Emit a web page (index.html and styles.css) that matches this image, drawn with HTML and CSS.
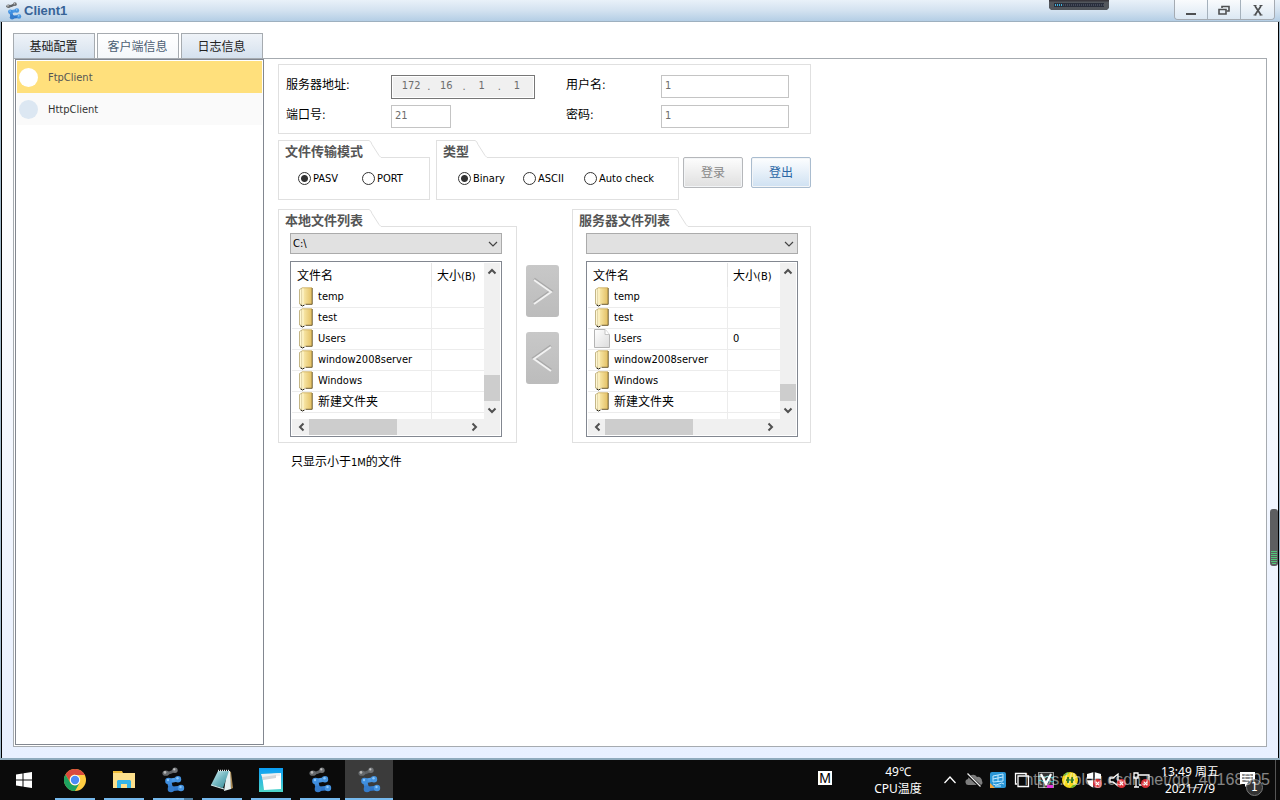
FILE: index.html
```html
<!DOCTYPE html>
<html lang="zh-CN">
<head>
<meta charset="utf-8">
<title>Client1</title>
<link rel="stylesheet" href="styles.css">
</head>
<body>
<svg class="defs" aria-hidden="true">
  <defs>
    <linearGradient id="gFolder" x1="0" x2="1" y1="0" y2="0"><stop offset="0" stop-color="#fbeeb4"/><stop offset="1" stop-color="#e3bf62"/></linearGradient>
    <linearGradient id="gPage" x1="0" x2="1" y1="0" y2="1"><stop offset="0" stop-color="#fff"/><stop offset="1" stop-color="#dcdcdc"/></linearGradient>
    <linearGradient id="gBlue" x1="0" x2="0" y1="0" y2="1"><stop offset="0" stop-color="#4f9eea"/><stop offset="1" stop-color="#2d74c8"/></linearGradient>
    <linearGradient id="gNote" x1="0" x2="1" y1="0" y2="1"><stop offset="0" stop-color="#d5f1f4"/><stop offset=".5" stop-color="#74b8c2"/><stop offset="1" stop-color="#2f8794"/></linearGradient>
    <linearGradient id="gSky" x1="0" x2="0" y1="0" y2="1"><stop offset="0" stop-color="#0a9df5"/><stop offset="1" stop-color="#4fd6c8"/></linearGradient>
    <symbol id="folder" viewBox="0 0 16 20">
      <path d="M1.500 2.500L4 1v16.500L1.500 17z" fill="#fff7d2" stroke="#b5a56c" stroke-width=".8"/>
      <path d="M4 .8h10V17H7l-2.500 1.500z" fill="url(#gFolder)"/>
      <path d="M4 .8h10" stroke="#c9ab5c" stroke-width=".8"/>
      <path d="M14.200 1v16.300H7.500" fill="none" stroke="#6b5828"/>
      <path d="M5 1.500v16" stroke="#fff6cf"/>
      <path d="M2.500 18l2 1 2-1" fill="none" stroke="#2a2618"/>
    </symbol>
    <symbol id="page" viewBox="0 0 16 20"><path d="M.5.500H11L15.500 5.500V18.500H.5z" fill="url(#gPage)" stroke="#b4b4b4"/><path d="M11 .5v5h4.500" fill="#fff" stroke="#c4c4c4"/></symbol>
    <symbol id="ensp" viewBox="0 0 24 26">
      <path d="M4.500 6.200Q8 6.500 14 3.200" fill="none" stroke="#5e6164" stroke-width="3"/>
      <ellipse cx="4.800" cy="6.200" rx="3.300" ry="2.600" fill="#66696c"/><circle cx="4" cy="5.400" r="1.300" fill="#b8b8b8"/><circle cx="14" cy="3.200" r="2.700" fill="#6f7275"/><circle cx="13.300" cy="2.400" r="1.100" fill="#c5c5c5"/>
      <path d="M17 12.300L8 14 10 22 19.500 21" fill="none" stroke="url(#gBlue)" stroke-width="4.400" stroke-linejoin="round"/>
      <circle cx="17" cy="12.300" r="3.200" fill="#4593df"/><circle cx="7.500" cy="14" r="3.300" fill="#3f8fe0"/><circle cx="10" cy="22" r="3.300" fill="#357ccb"/><circle cx="20" cy="21" r="3.200" fill="#4593df"/>
      <circle cx="16.500" cy="11.300" r="1.200" fill="#8cc6f8"/><circle cx="7" cy="13" r="1.200" fill="#8cc6f8"/><circle cx="19.500" cy="20" r="1.200" fill="#8cc6f8"/>
    </symbol>
    <symbol id="down" viewBox="0 0 10 6"><path d="M1 1l4 4 4-4" fill="none" stroke="#444" stroke-width="1.200"/></symbol>
    <symbol id="sb-up" viewBox="0 0 16 16"><path d="M4.500 10.500L8 7l3.500 3.500" fill="none" stroke="#505050" stroke-width="2"/></symbol>
    <symbol id="badx" viewBox="0 0 10 10"><circle cx="5" cy="5" r="5" fill="#d93036"/><path d="M3 3l4 4M7 3L3 7" stroke="#fff" stroke-width="1.300"/></symbol>
  </defs>
</svg>

<div class="window">
  <header class="titlebar">
    <svg class="app-icon"><use href="#ensp"/></svg>
    <h1 class="title">Client1</h1>
    <div class="win-buttons">
      <button class="win-btn" aria-label="Minimize"><svg width="12" height="12" viewBox="0 0 12 12"><path d="M1 10h10" stroke="#4e5052" stroke-width="2"/></svg></button>
      <button class="win-btn" aria-label="Restore"><svg width="12" height="12" viewBox="0 0 12 12"><path d="M4 4V2.500h7V7H8.500" fill="none" stroke="#4e5052" stroke-width="1.600"/><path d="M1 5.500h7v4.500H1z" fill="none" stroke="#4e5052" stroke-width="1.600"/></svg></button>
      <button class="win-btn" aria-label="Close"><svg width="12" height="12" viewBox="0 0 12 12"><path d="M3 2l6 9M9 2L3 11" stroke="#4e5052" stroke-width="1.700"/><path d="M1.500 1.500h3M7.500 1.500h3M1.500 11h3M7.500 11h3" stroke="#4e5052"/></svg></button>
    </div>
  </header>

  <main class="client">
    <nav class="tabs">
      <button class="tab">基础配置</button>
      <button class="tab tab-on">客户端信息</button>
      <button class="tab">日志信息</button>
    </nav>
    <div class="pane">
      <ul class="sidebar">
        <li><button class="side-item side-on"><span class="dot"></span>FtpClient</button></li>
        <li><button class="side-item"><span class="dot"></span>HttpClient</button></li>
      </ul>
      <div class="work">
        <form class="login">
          <label for="ip1">服务器地址:</label>
          <div class="ip"><input id="ip1" value="172" disabled><span>.</span><input aria-label="ip 2" value="16" disabled><span>.</span><input aria-label="ip 3" value="1" disabled><span>.</span><input aria-label="ip 4" value="1" disabled></div>
          <label for="user">用户名:</label>
          <input id="user" class="field" value="1">
          <label for="port">端口号:</label>
          <input id="port" class="field field-short" value="21">
          <label for="pass">密码:</label>
          <input id="pass" class="field" value="1">
        </form>

        <div class="options">
          <section class="group group-mode">
            <div class="group-head"><h2>文件传输模式</h2><svg class="slant" viewBox="0 0 12 18"><path d="M0 .5Q2 1 3 4.500L10 15.500 12 17.500" fill="none" stroke="#e0e0e0"/></svg><span></span></div>
            <div class="group-body radios radios-mode">
              <label><input type="radio" name="mode" checked>PASV</label>
              <label><input type="radio" name="mode">PORT</label>
            </div>
          </section>
          <section class="group group-type">
            <div class="group-head"><h2>类型</h2><svg class="slant" viewBox="0 0 12 18"><path d="M0 .5Q2 1 3 4.500L10 15.500 12 17.500" fill="none" stroke="#e0e0e0"/></svg><span></span></div>
            <div class="group-body radios radios-type">
              <label><input type="radio" name="type" checked>Binary</label>
              <label><input type="radio" name="type">ASCII</label>
              <label><input type="radio" name="type">Auto check</label>
            </div>
          </section>
          <div class="actions">
            <button class="btn" disabled>登录</button>
            <button class="btn btn-blue">登出</button>
          </div>
        </div>

        <div class="files">
          <section class="group">
            <div class="group-head"><h2>本地文件列表</h2><svg class="slant" viewBox="0 0 12 18"><path d="M0 .5Q2 1 3 4.500L10 15.500 12 17.500" fill="none" stroke="#e0e0e0"/></svg><span></span></div>
            <div class="group-body browser">
              <div class="drop"><select aria-label="本地文件列表"><option>C:\</option></select><svg><use href="#down"/></svg></div>
              <div class="listbox">
                <table>
                  <thead><tr><th class="c-name">文件名</th><th>大小<small>(B)</small></th></tr></thead>
                  <tbody>
                    <tr><td><svg class="fi"><use href="#folder"/></svg>temp</td><td></td></tr>
                    <tr><td><svg class="fi"><use href="#folder"/></svg>test</td><td></td></tr>
                    <tr><td><svg class="fi"><use href="#folder"/></svg>Users</td><td></td></tr>
                    <tr><td><svg class="fi"><use href="#folder"/></svg>window2008server</td><td></td></tr>
                    <tr><td><svg class="fi"><use href="#folder"/></svg>Windows</td><td></td></tr>
                    <tr class="cjk"><td><svg class="fi"><use href="#folder"/></svg>新建文件夹</td><td></td></tr>
                    <tr class="rest"><td></td><td></td></tr>
                  </tbody>
                </table>
                <div class="vbar"><svg><use href="#sb-up"/></svg><i class="thumb thumb-local"></i><svg class="flip"><use href="#sb-up"/></svg></div>
                <div class="hbar"><svg class="left"><use href="#sb-up"/></svg><i class="thumb"></i><svg class="right"><use href="#sb-up"/></svg></div>
              </div>
            </div>
          </section>
          <div class="transfer">
            <button aria-label="上传"><svg viewBox="0 0 33 52"><path d="M8 14l17 12L8 38" fill="none" stroke="#a9a9a9" stroke-width="3"/><path d="M8 15l17 12L8 39" fill="none" stroke="#f2f2f2" stroke-width="2"/></svg></button>
            <button aria-label="下载"><svg viewBox="0 0 33 52"><path d="M25 14L8 26l17 12" fill="none" stroke="#a9a9a9" stroke-width="3"/><path d="M25 15L8 27l17 12" fill="none" stroke="#f2f2f2" stroke-width="2"/></svg></button>
          </div>
          <section class="group">
            <div class="group-head"><h2>服务器文件列表</h2><svg class="slant" viewBox="0 0 12 18"><path d="M0 .5Q2 1 3 4.500L10 15.500 12 17.500" fill="none" stroke="#e0e0e0"/></svg><span></span></div>
            <div class="group-body browser browser-server">
              <div class="drop"><select aria-label="服务器文件列表"><option></option></select><svg><use href="#down"/></svg></div>
              <div class="listbox">
                <table>
                  <thead><tr><th class="c-name">文件名</th><th>大小<small>(B)</small></th></tr></thead>
                  <tbody>
                    <tr><td><svg class="fi"><use href="#folder"/></svg>temp</td><td></td></tr>
                    <tr><td><svg class="fi"><use href="#folder"/></svg>test</td><td></td></tr>
                    <tr><td><svg class="fi"><use href="#page"/></svg>Users</td><td>0</td></tr>
                    <tr><td><svg class="fi"><use href="#folder"/></svg>window2008server</td><td></td></tr>
                    <tr><td><svg class="fi"><use href="#folder"/></svg>Windows</td><td></td></tr>
                    <tr class="cjk"><td><svg class="fi"><use href="#folder"/></svg>新建文件夹</td><td></td></tr>
                    <tr class="rest"><td></td><td></td></tr>
                  </tbody>
                </table>
                <div class="vbar"><svg><use href="#sb-up"/></svg><i class="thumb thumb-server"></i><svg class="flip"><use href="#sb-up"/></svg></div>
                <div class="hbar"><svg class="left"><use href="#sb-up"/></svg><i class="thumb"></i><svg class="right"><use href="#sb-up"/></svg></div>
              </div>
            </div>
          </section>
        </div>
        <p class="hint">只显示小于<small>1M</small>的文件</p>
      </div>
    </div>
  </main>
</div>

<div class="meter meter-top"><svg width="60" height="10" viewBox="0 0 60 10"><path d="M0 0h60v8l-2 2H2l-2-2z" fill="#53575d"/><path d="M0 0h60v1.500H0z" fill="#39363c"/><rect x="5" y="3" width="50" height="4" fill="#292e3b"/><path d="M6 4h1v2H6zM8 4h1v2H8zM10 4h1v2h-1zM12 4h1v2h-1z" fill="#3fb2dc"/><path d="M14 5h41" stroke="#454a5a" stroke-width="2" stroke-dasharray="1 1"/></svg></div>
<div class="meter meter-side"><svg width="8" height="57" viewBox="0 0 8 57"><rect width="8" height="57" rx="3" fill="#5d5e60"/><path d="M1 42h6v1H1zM1 44h6v1H1zM1 46h6v1H1zM1 48h6v1H1zM1 50h6v1H1zM1 52h6v1H1zM2 54h4v1H2z" fill="#50c878"/></svg></div>

<footer class="taskbar">
  <button class="task start" aria-label="Start"><svg width="16" height="16" viewBox="0 0 16 16"><path d="M0 2.500L6.500 1.500V7.500H0zM7.500 1.300L16 0v7.500H7.500zM0 8.500h6.500v6L0 13.500zM7.500 8.500H16V16L7.500 14.700z" fill="#fff"/></svg></button>
  <button class="task run" aria-label="Chrome"><svg width="22" height="22" viewBox="0 0 22 22"><circle cx="11" cy="11" r="11" fill="#ffcd41"/><path d="M1.470 5.500A11 11 0 0 1 20.530 5.500H11A5.500 5.500 0 0 0 6.200 13.700z" fill="#d94a3d"/><path d="M1.470 5.500L6.240 13.750A5.500 5.500 0 0 0 15.760 13.750L11 22A11 11 0 0 1 1.470 5.500z" fill="#1da260"/><path d="M11 5.500h9.500" stroke="#d94a3d"/><circle cx="11" cy="11" r="5.200" fill="#fff"/><circle cx="11" cy="11" r="4.200" fill="#4c8bf5"/></svg></button>
  <button class="task run" aria-label="Explorer"><svg width="22" height="20" viewBox="0 0 22 20"><path d="M0 1h9l1 2h11v15H0z" fill="#f0bd38"/><path d="M0 3h22v15H0z" fill="#fde08c"/><path d="M4 18v-7l1-1h12l1 1v7h-4v-4H8v4z" fill="#35b4e8"/></svg></button>
  <button class="task run run-multi" aria-label="eNSP"><svg width="24" height="26"><use href="#ensp"/></svg></button>
  <button class="task run" aria-label="Notepad"><svg width="24" height="24" viewBox="0 0 24 24"><path d="M19 3l2 1 2 16-2 1z" fill="#a98a56"/><path d="M17 3l3 0 1 18-7 2z" fill="#e3eff0"/><path d="M8 3l11 0-6 17-12-3z" fill="url(#gNote)"/><path d="M8 2.500h12" stroke="#e8e8e8" stroke-width="1.500" stroke-dasharray="1 1"/><path d="M1 17l13 4" fill="none" stroke="#cfe7ea" stroke-width="1.200"/></svg></button>
  <button class="task run" aria-label="Window"><svg width="24" height="24" viewBox="0 0 24 24"><path d="M0 0h24v24H0z" fill="url(#gSky)"/><path d="M3 7l19-2v16l-17 1z" fill="#fff"/><path d="M2 6l19-1v3L3 9z" fill="#eef0f2"/><path d="M3 9l14-2v3L4 12z" fill="#d3d7da"/></svg></button>
  <button class="task run" aria-label="eNSP"><svg width="24" height="26"><use href="#ensp"/></svg></button>
  <button class="task run task-on" aria-label="Client1"><svg width="24" height="26"><use href="#ensp"/></svg></button>

  <div class="tray">
    <span class="ime">M</span>
    <div class="info temp">49℃<br>CPU温度</div>
    <div class="icons">
      <svg viewBox="0 0 24 24"><path d="M6.500 15l5.500-6 5.500 6" fill="none" stroke="#fff" stroke-width="1.300"/></svg>
      <svg viewBox="0 0 24 24"><path d="M7 17a3 3 0 0 1-1-6 5 5 0 0 1 9-2 4 4 0 0 1 5 4 3 3 0 0 1-1 4z" fill="#7e7e7e"/><path d="M5 6l14 13" stroke="#0b0b0b" stroke-width="3"/><path d="M5.500 5.500l13 13" stroke="#eee" stroke-width="1.300"/></svg>
      <svg viewBox="0 0 24 24"><rect x="4" y="4" width="16" height="16" rx="2" fill="#2a95d5"/><path d="M4 15l5 5H4z" fill="#f3a43c"/><path d="M7 8l10-2v7l-10 1zM7 11l10-2M12 7v7M7 16q3 2 6 0t5 0M9 18h6" fill="none" stroke="#bfe8ff"/></svg>
      <svg viewBox="0 0 24 24"><path d="M7 16H5.500V5.500H16V7M8 8h10.500v10.500H8z" fill="none" stroke="#fff" stroke-width="1.300"/></svg>
      <svg viewBox="0 0 24 24"><rect x="4.500" y="4.500" width="15" height="15" fill="#333" stroke="#999"/><path d="M4 9q2-2 4 0t4 0 4 0 4 0M4 13q2-2 4 0t4 0 4 0 4 0" stroke="#39cfd1" fill="none"/><path d="M7 6l5 10 5-10" fill="none" stroke="#fff" stroke-width="2.200"/><path d="M13 17h6v3h-6z" fill="#e332de"/></svg>
      <svg viewBox="0 0 24 24"><circle cx="12" cy="12" r="8" fill="#f6d91c"/><path d="M5 8a8 8 0 0 1 7-4l-3 3z" fill="#68b52e"/><path d="M19 16a8 8 0 0 1-7 4l3-3z" fill="#68b52e"/><path d="M8 12h8M10 9v6M14 9v6" stroke="#397e1c" stroke-width="2"/></svg>
      <svg viewBox="0 0 24 24"><path d="M12 4l7 2v6q0 5-7 8-7-3-7-8V6z" fill="#fff"/><path d="M12 4v16M5 11.500h14" stroke="#111" stroke-width="1.500"/><use href="#badx" x="11" y="11" width="9" height="9"/></svg>
      <svg viewBox="0 0 24 24"><path d="M4 10h3l5-4v12l-5-4H4z" fill="none" stroke="#fff" stroke-width="1.300"/><use href="#badx" x="11" y="11" width="9" height="9"/></svg>
      <svg viewBox="0 0 24 24"><path d="M8 7h11v10H9M4 5h4v5H4zM6 10v9M4 19h5" fill="none" stroke="#fff" stroke-width="1.300"/><use href="#badx" x="11" y="11" width="9" height="9"/></svg>
    </div>
    <div class="info clock">13:49 周五<br>2021/7/9</div>
    <button class="notice" aria-label="Notifications"><svg width="18" height="18" viewBox="0 0 18 18"><path d="M1 1h15v12H9l-3 3v-3H1z" fill="#fff"/><path d="M3 4h11M3 7h11M3 10h7" stroke="#111"/></svg><span class="badge">1</span></button>
    <span class="peek"></span>
  </div>
  <span class="mark">https://blog.csdn.net/qq_40168905</span>
</footer>
</body>
</html>
```

FILE: styles.css
```css
* { box-sizing: border-box; }
html, body { height: 100%; }
body {
  margin: 0;
  display: flex;
  flex-direction: column;
  position: relative;
  overflow: hidden;
  font: 11px/16px "DejaVu Sans Condensed", "Noto Sans CJK SC", sans-serif;
  color: #000;
  background: #0b0b0b;
}
button, input, select { font: inherit; color: inherit; margin: 0; padding: 0; border-radius: 0; }
h1, h2, p, ul { margin: 0; padding: 0; list-style: none; }
.defs { position: absolute; width: 0; height: 0; }

.window {
  flex: 1;
  min-height: 0;
  display: flex;
  flex-direction: column;
  border-bottom: 2px solid #8fabbd;
  background: #9fb8ca;
}
.titlebar {
  flex: none;
  height: 22px;
  display: flex;
  align-items: center;
  padding: 0 5px;
  background: linear-gradient(#e9f1f9, #d3e2f0 50%, #b4cee5);
  border-bottom: 1px solid #9eb0bf;
}
.app-icon { width: 17px; height: 18px; }
.title { flex: 1; margin-left: 2px; font: bold 13px/18px "Liberation Sans", sans-serif; color: #376397; }
.win-buttons {
  align-self: flex-start;
  display: flex;
  height: 20px;
  border: 1px solid #a5abb2;
  border-top: 0;
  border-radius: 0 0 4px 4px;
  overflow: hidden;
}
.win-btn {
  width: 33px;
  display: grid;
  place-items: center;
  border: 0;
  border-right: 1px solid #a5b1bc;
  background: linear-gradient(#f9fbfd, #dce8f3);
}
.win-btn:last-child { border-right: 0; }

.client {
  flex: 1;
  min-height: 0;
  display: flex;
  flex-direction: column;
  margin: 0 1px;
  padding: 11px;
  border: 1px solid #000;
  border-width: 0 1px;
  background: linear-gradient(#fff, #fff 15%, #e8f0ff);
}
.tabs { display: flex; gap: 2px; }
.tab {
  width: 82px;
  height: 25px;
  padding: 1px 1px 0 0;
  border: 1px solid #a6abb0;
  border-bottom: 0;
  background: linear-gradient(#eff3f8, #d5e1ee);
  font-size: 12px;
  color: #222;
}
.tab-on { background: linear-gradient(#fff, #f4f7fa); color: #4d5f73; }
.pane {
  flex: 1;
  min-height: 0;
  display: flex;
  border: 1px solid #a6abb0;
  background: #fff;
  padding: 0 0 1px 1px;
}
.sidebar { width: 249px; flex: none; padding: 1px; border: 1px solid #828790; }
.side-item {
  display: flex;
  align-items: center;
  gap: 10px;
  width: 100%;
  height: 32px;
  padding: 0 2px;
  border: 0;
  background: #fafafa;
  color: #333;
  line-height: 17px;
}
.side-on { background: #ffe07c; color: #555; }
.dot { width: 19px; height: 19px; border-radius: 50%; background: #dce7f2; }
.side-on .dot { background: #fff; }

.work { flex: 1; max-width: 547px; padding: 5px 0 0 14px; }
.login {
  display: grid;
  grid-template-columns: 105px 175px 95px 1fr;
  grid-template-rows: 24px 23px;
  row-gap: 6px;
  padding: 10px 21px 5px 7px;
  border: 1px solid #e0e0e0;
}
.login label { font-size: 12px; line-height: 20px; }
.ip {
  display: flex;
  width: 144px;
  padding: 0 1px 2px 3px;
  border: 1px solid #777;
  box-shadow: inset 0 0 0 1px #fff;
  background: #f0f0f0;
  color: #6d6d6d;
}
.ip input { flex: 1; min-width: 0; border: 0; background: none; text-align: center; color: #6d6d6d; }
.ip span { width: 3px; line-height: 21px; }
.field { width: 100%; height: 23px; padding: 0 3px 3px; border: 1px solid #c4c4c4; background: #fff; color: #6d6d6d; }
.field-short { width: 60px; }

.options { display: flex; margin-top: 6px; }
.group { display: flex; flex-direction: column; }
.group-mode { width: 152px; margin-right: 6px; }
.group-type { width: 243px; margin-right: 4px; }
.group-head { display: flex; height: 18px; }
.group-head h2 {
  padding: 0 6px;
  border: 1px solid #e0e0e0;
  border-width: 1px 0 0 1px;
  font: bold 13px/20px "Noto Sans CJK SC", sans-serif;
  color: #555;
}
.group-head .slant { width: 12px; height: 18px; }
.group-head span { flex: 1; border-bottom: 1px solid #e0e0e0; }
.group-body { flex: 1 0 auto; border: 1px solid #e0e0e0; border-top: 0; }
.radios { display: grid; align-items: center; height: 42px; padding-left: 19px; }
.radios-mode { grid-template-columns: 64px 1fr; }
.radios-type { grid-template-columns: 65px 61px 1fr; padding-left: 21px; }
.radios label { display: flex; align-items: center; gap: 2px; white-space: nowrap; }
.radios input {
  appearance: none;
  width: 13px;
  height: 13px;
  border: 1px solid #333;
  border-radius: 50%;
  background: #fff;
}
.radios input:checked { background: radial-gradient(circle, #333 0 3px, #fff 4px); }
.actions { display: flex; gap: 8px; padding-top: 17px; }
.btn {
  width: 60px;
  height: 31px;
  border: 1px solid #b5b7ba;
  border-radius: 2px;
  box-shadow: inset 0 0 0 1px #f3f5f7;
  background: linear-gradient(#fdfdfd, #dfdfdf);
  font-size: 12px;
  color: #888;
}
.btn-blue { border-color: #a9bccf; background: linear-gradient(#fdfeff, #cfe1f2); color: #2a66a5; }

.files { display: flex; margin-top: 9px; }
.files .group { flex: 1; min-width: 0; }
.browser { display: flex; flex-direction: column; gap: 7px; padding: 6px 14px 5px 11px; }
.browser-server { padding: 6px 12px 5px 13px; }
.drop { position: relative; height: 21px; }
.drop select {
  appearance: none;
  display: block;
  width: 100%;
  height: 21px;
  padding: 0 2px;
  border: 1px solid #ababab;
  background: #e1e1e1;
}
.drop svg { position: absolute; right: 4px; top: 8px; width: 10px; height: 6px; pointer-events: none; }
.listbox {
  display: grid;
  grid-template-columns: 1fr 16px;
  grid-template-rows: 156px 16px;
  padding: 1px;
  border: 1px solid #828790;
}
table { width: 100%; border-collapse: separate; border-spacing: 0; table-layout: fixed; }
th { height: 24px; padding: 2px 5px 0; font-size: 12px; font-weight: normal; text-align: left; white-space: nowrap; }
.c-name { width: 140px; border-right: 1px solid #e5e5e5; }
small { font-size: 11px; }
td { height: 21px; padding: 0 5px; border-bottom: 1px solid #ececec; line-height: 20px; white-space: nowrap; }
td:first-child { padding: 0 6px; border-right: 1px solid #ececec; }
.cjk td { font-size: 12px; }
.rest td { height: 6px; border-bottom: 0; }
.fi { width: 16px; height: 20px; margin-right: 4px; vertical-align: bottom; display: inline-block; }
.vbar { display: flex; flex-direction: column; background: #f0f0f0; }
.vbar svg, .hbar svg { width: 16px; height: 16px; flex: none; }
.thumb { background: #cdcdcd; }
.thumb-local { height: 26px; margin: auto 0 2px; }
.thumb-server { height: 17px; margin: auto 0 2px; }
.flip { transform: rotate(180deg); }
.left { transform: rotate(-90deg); }
.right { transform: rotate(90deg); margin-left: auto; }
.hbar { grid-column: 1 / 3; display: flex; padding: 0 17px 0 1px; background: #f0f0f0; }
.hbar .thumb { width: 88px; }
.transfer { width: 55px; display: flex; flex-direction: column; align-items: center; gap: 15px; padding: 56px 4px 0 0; }
.transfer button { width: 33px; height: 52px; border: 0; border-radius: 3px; background: linear-gradient(#c8c8c8, #bcbcbc); }
.transfer svg { display: block; width: 33px; height: 52px; }
.hint { margin: 11px 0 0 13px; font-size: 12px; }

.meter { position: absolute; }
.meter svg { display: block; }
.meter-top { right: 171px; top: 0; }
.meter-side { right: 2px; top: 509px; }

.taskbar { position: relative; flex: none; display: flex; height: 40px; background: #0b0b0b; color: #fff; }
.task { width: 48px; margin-right: 1px; display: grid; place-items: center; border: 0; background: none; position: relative; }
.start { margin-right: 3px; }
.task-on { background: #3b3b3b; }
.run::after { content: ""; position: absolute; left: 4px; right: 4px; bottom: 0; height: 2px; background: #76b9ed; }
.run-multi::after { background: linear-gradient(90deg, #76b9ed 31px, #4c7c9f 31px); }
.task-on::after { left: 0; right: 0; }
.tray { display: flex; align-items: center; margin-left: auto; }
.ime { width: 14px; height: 14px; margin: 0 36px 4px 0; background: #fff; color: #000; font: 14px/14px "Liberation Sans", sans-serif; text-align: center; }
.info { font: 12px/17px "Noto Sans", "Noto Sans CJK SC", sans-serif; text-align: center; }
.temp { width: 60px; margin-right: 10px; }
.clock { width: 72px; }
.icons { display: flex; }
.icons svg { width: 24px; height: 24px; }
.notice { position: relative; width: 44px; height: 40px; display: grid; place-items: center; border: 0; background: none; }
.badge {
  position: absolute;
  left: 20px;
  top: 19px;
  width: 17px;
  height: 17px;
  border: 1px solid #777;
  border-radius: 50%;
  background: #333;
  color: #fff;
  font-size: 12px;
  line-height: 15px;
}
.peek { width: 5px; height: 40px; margin-left: 5px; border-left: 1px solid #555; }
.mark { position: absolute; right: 10px; bottom: 10px; font: 16px/20px "Liberation Sans", sans-serif; color: rgba(255, 255, 255, 0.5); }
```
